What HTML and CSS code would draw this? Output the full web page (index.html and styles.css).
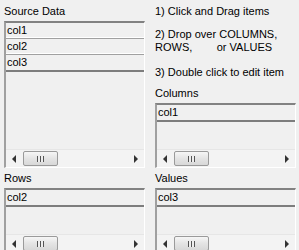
FILE: index.html
```html
<!DOCTYPE html>
<html lang="en">
<head>
    <meta charset="UTF-8">
    <title>Pivot Setup</title>
    <link rel="stylesheet" href="styles.css">
</head>
<body>
    <div class="form">
        <div class="panel">
            <div class="caption">Source Data</div>
            <div class="list tall">
                <div class="items">
                    <div class="item">col1</div>
                    <div class="item">col2</div>
                    <div class="item last">col3</div>
                </div>
                <div class="hscroll">
                    <span class="arrow left"></span>
                    <span class="track"><span class="thumb"><span class="grip"></span></span></span>
                    <span class="arrow right"></span>
                </div>
            </div>
        </div>
        <div class="panel">
            <div class="help">
                <p class="step1">1) Click and Drag items</p>
                <p class="step2">2) Drop over COLUMNS,<br>ROWS,        or VALUES</p>
                <p class="step3">3) Double click to edit item</p>
            </div>
            <div class="caption cols">Columns</div>
            <div class="list short">
                <div class="items">
                    <div class="item last">col1</div>
                </div>
                <div class="hscroll">
                    <span class="arrow left"></span>
                    <span class="track"><span class="thumb"><span class="grip"></span></span></span>
                    <span class="arrow right"></span>
                </div>
            </div>
        </div>
        <div class="panel">
            <div class="caption low">Rows</div>
            <div class="list short">
                <div class="items">
                    <div class="item last">col2</div>
                </div>
                <div class="hscroll">
                    <span class="arrow left"></span>
                    <span class="track"><span class="thumb"><span class="grip"></span></span></span>
                    <span class="arrow right"></span>
                </div>
            </div>
        </div>
        <div class="panel">
            <div class="caption low">Values</div>
            <div class="list short">
                <div class="items">
                    <div class="item last">col3</div>
                </div>
                <div class="hscroll">
                    <span class="arrow left"></span>
                    <span class="track"><span class="thumb"><span class="grip"></span></span></span>
                    <span class="arrow right"></span>
                </div>
            </div>
        </div>
    </div>
</body>
</html>
```

FILE: styles.css
```css
html, body {
    margin: 0;
    padding: 0;
    background: #f0f0f0;
    overflow: hidden;
}
body {
    font-family: "Liberation Sans", Arial, sans-serif;
    font-size: 11px;
    line-height: 13px;
    color: #000;
}
.form {
    display: grid;
    grid-template-columns: 141px 141px;
    column-gap: 10px;
    padding: 5px 0 0 4px;
}
.panel {
    display: flex;
    flex-direction: column;
}
.caption {
    height: 13px;
    margin-bottom: 3px;
}
.caption.cols {
    margin-top: 8px;
}
.caption.low {
    margin-top: 4px;
}
.help p {
    margin: 0;
    white-space: pre;
}
.help .step2 {
    margin-top: 10px;
}
.help .step3 {
    margin-top: 12px;
}
.list {
    box-sizing: border-box;
    display: flex;
    flex-direction: column;
    justify-content: space-between;
    border-style: solid;
    border-width: 2px 1px 1px 2px;
    border-color: #828282 #ffffff #ffffff #a0a0a0;
    background: #f0f0f0;
}
.list.tall {
    height: 147px;
}
.list.short {
    height: 65px;
}
.item {
    height: 15px;
    line-height: 15px;
    padding-left: 1px;
    border-bottom: 1px solid #a0a0a0;
    box-shadow: inset 0 -1px 0 #ffffff;
}
.item.last {
    border-bottom: 2px solid #7d7d7d;
    box-shadow: none;
}
.hscroll {
    display: flex;
    align-items: center;
    height: 17px;
    background: #f3f3f3;
    border-top: 1px solid #e6e6e6;
}
.arrow {
    width: 17px;
    height: 17px;
    position: relative;
}
.arrow::after {
    content: "";
    position: absolute;
    top: 5px;
    width: 0;
    height: 0;
    border-top: 4px solid transparent;
    border-bottom: 4px solid transparent;
}
.arrow.left::after {
    left: 6px;
    border-right: 4px solid #333;
}
.arrow.right::after {
    left: 7px;
    border-left: 4px solid #333;
}
.track {
    flex: 1;
    height: 17px;
    display: flex;
    align-items: center;
}
.thumb {
    box-sizing: border-box;
    width: 35px;
    height: 15px;
    border: 1px solid #9a9a9a;
    border-radius: 2px;
    background: linear-gradient(#f6f6f6, #e4e4e4 50%, #d8d8d8);
    display: flex;
    align-items: center;
    justify-content: center;
}
.grip {
    width: 7px;
    height: 6px;
    background: repeating-linear-gradient(90deg, #555 0 1px, #eee 1px 3px);
}
```
